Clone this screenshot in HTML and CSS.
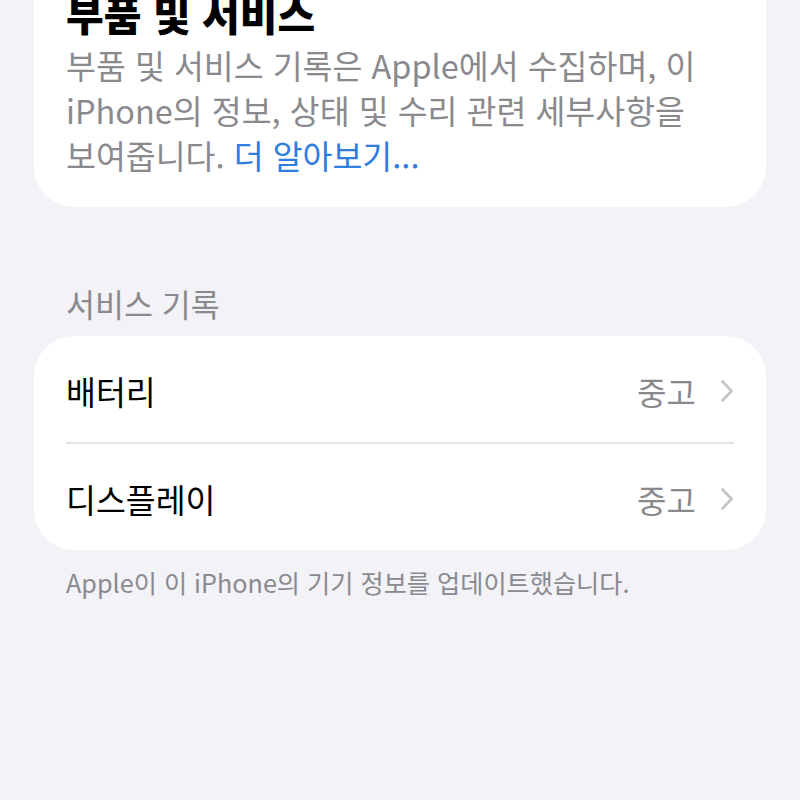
FILE: index.html
```html
<!DOCTYPE html>
<html lang="ko">
<head>
<meta charset="utf-8">
<link rel="stylesheet" href="styles.css">
</head>
<body>
<div class="page">
  <section class="card intro">
    <h1 class="title">부품 및 서비스</h1>
    <p class="desc">부품 및 서비스 기록은 Apple에서 수집하며, 이<br>iPhone의 정보, 상태 및 수리 관련 세부사항을<br>보여줍니다. <span class="link">더 알아보기...</span></p>
  </section>

  <h2 class="section-header">서비스 기록</h2>
  <section class="card list">
    <div class="row">
      <span class="row-label">배터리</span>
      <span class="row-value">중고</span>
      <svg class="chev" width="14" height="24" viewBox="0 0 14 24"><path d="M2.5 2.5 L11.5 12 L2.5 21.5" fill="none" stroke="#c4c4c8" stroke-width="2.6" stroke-linecap="round" stroke-linejoin="round"/></svg>
    </div>
    <div class="sep"></div>
    <div class="row">
      <span class="row-label">디스플레이</span>
      <span class="row-value">중고</span>
      <svg class="chev" width="14" height="24" viewBox="0 0 14 24"><path d="M2.5 2.5 L11.5 12 L2.5 21.5" fill="none" stroke="#c4c4c8" stroke-width="2.6" stroke-linecap="round" stroke-linejoin="round"/></svg>
    </div>
  </section>
  <p class="footer">Apple이 이 iPhone의 기기 정보를 업데이트했습니다.</p>
</div>
</body>
</html>
```

FILE: styles.css
```css
html, body {
  margin: 0;
  padding: 0;
  background: #f2f2f7;
  height: 100%;
  overflow: hidden;
}
body {
  font-family: "Noto Sans CJK KR", "Noto Sans", sans-serif;
  color: #000;
}
.page {
  padding: 0 34px;
}
.card {
  background: #fff;
  border-radius: 40px;
}
.intro {
  margin-top: -40px;
  padding: 28px 32px 30px;
}
.title {
  margin: 0;
  font-size: 41px;
  line-height: 50px;
  font-weight: 800;
}
.desc {
  margin: 4px 0 0;
  font-size: 32.5px;
  line-height: 45px;
  color: #8a8a8e;
}
.link {
  color: #2f7ddf;
}
.section-header {
  margin: 78px 0 15px 32px;
  font-size: 31.5px;
  line-height: 36px;
  font-weight: 400;
  color: #8a8a8e;
}
.list {
  padding: 0 32px;
}
.row {
  box-sizing: border-box;
  height: 106px;
  padding-top: 3px;
  display: flex;
  align-items: center;
}
.row-label {
  flex: 1;
  font-size: 32.5px;
}
.row-value {
  font-size: 32px;
  color: #8a8a8e;
  margin-right: 24px;
}
.chev {
  display: block;
}
.sep {
  height: 2px;
  background: #e4e4e8;
}
.footer {
  margin: 16px 0 0 32px;
  font-size: 25.2px;
  line-height: 32px;
  color: #8a8a8e;
}
```
